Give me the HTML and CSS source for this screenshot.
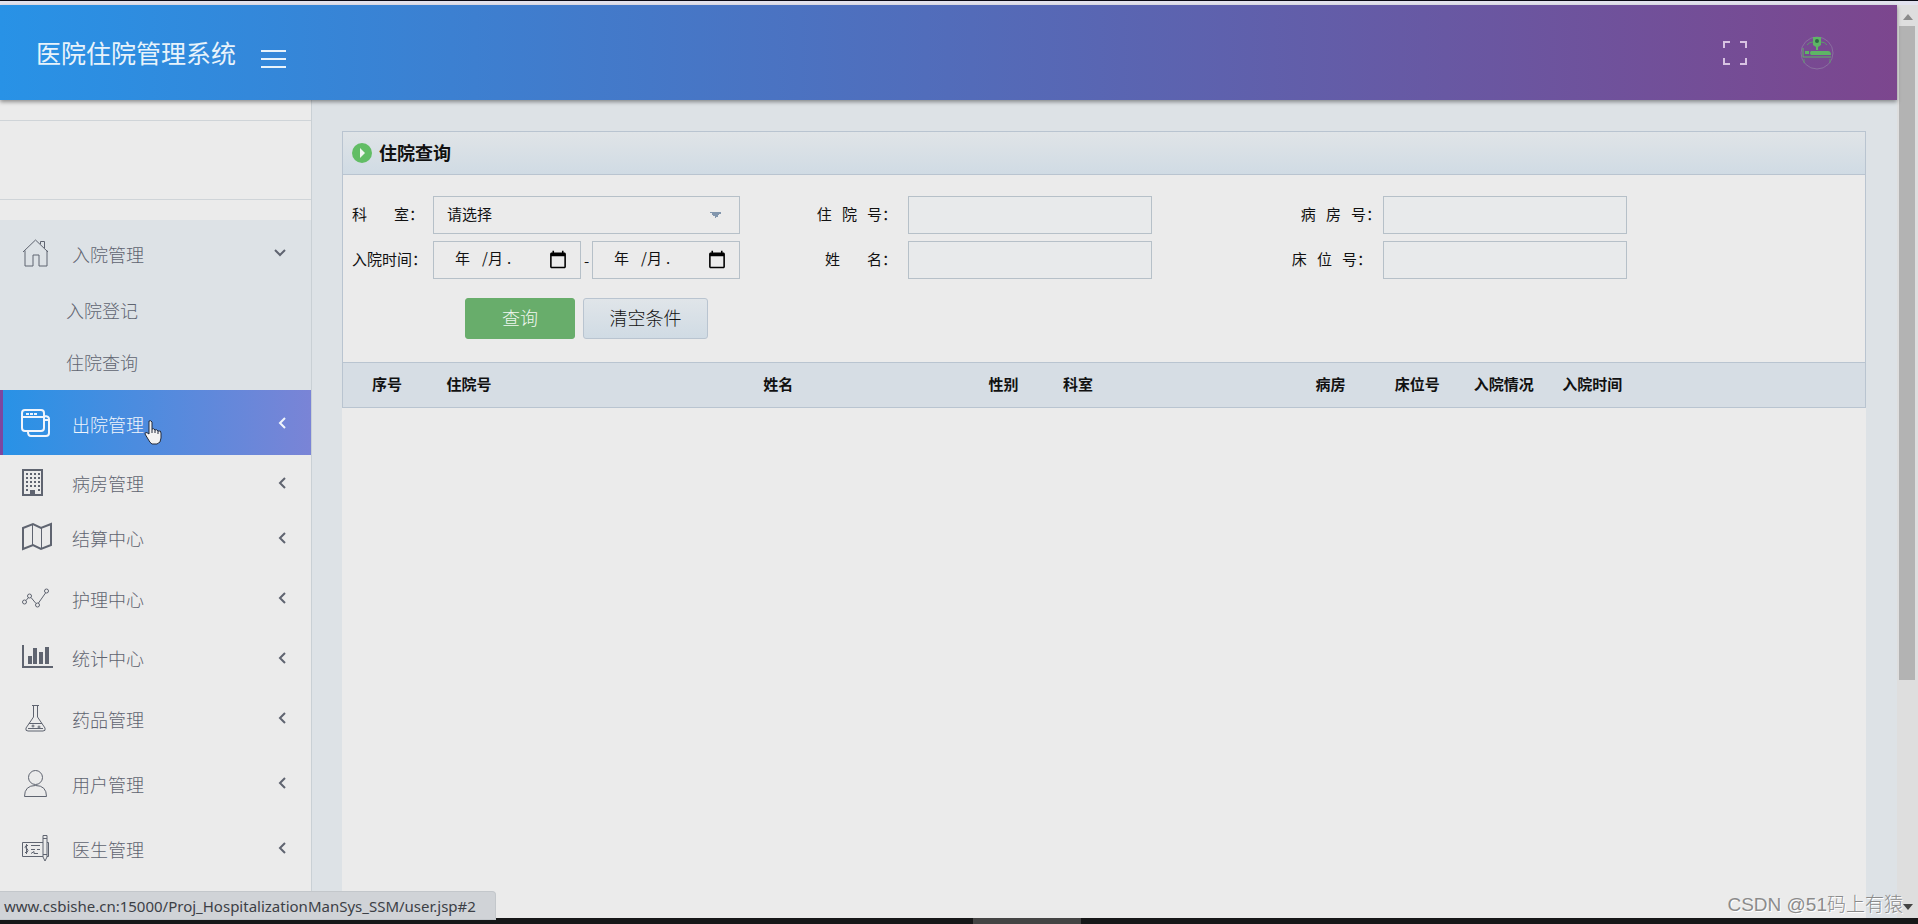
FILE: index.html
```html
<!DOCTYPE html>
<html lang="zh-CN">
<head>
  <meta charset="UTF-8">
  <meta name="viewport" content="width=device-width, initial-scale=1.0">
  <title>医院住院管理系统</title>
  <link rel="stylesheet" href="styles.css">
</head>
<body>
  <div class="top-edge"></div>

  <div class="window">
    <div class="page">
      <header class="topbar">
        <h1>医院住院管理系统</h1>
        <button class="menu-toggle" type="button" aria-label="菜单"><span></span><span></span><span></span></button>
        <button class="fullscreen" type="button" aria-label="全屏">
          <svg width="26" height="26" viewBox="0 0 26 26"><path d="M2 8V2h6M18 2h6v6M24 18v6h-6M8 24H2v-6"/></svg>
        </button>
        <a class="avatar" href="#" aria-label="用户">
          <svg width="36" height="36" viewBox="0 0 36 36">
            <circle cx="18" cy="18" r="16" fill="none" stroke="#8a6fa0"/>
            <path d="M14 2h8v8l-3 2v3h-2v-3l-3-2z" fill="#5eb565"/>
            <circle cx="18" cy="6" r="2" fill="#2d6a45"/>
            <path d="M8 10q2-3 6-3M28 10q-2-3-6-3" fill="none" stroke="#5c9a6c"/>
            <path d="M4 13v9h28" fill="none" stroke="#5eb565" stroke-width="1"/>
            <path d="M6 16h4v3H6zM12 16h17q3 0 3 4H12q-2-2 0-4z" fill="#5eb565"/>
            <path d="M5 24v4M31 24v4" stroke="#5c9a6c"/>
          </svg>
        </a>
      </header>

      <div class="content">
        <!-- Sidebar -->
        <nav class="sidebar">
          <div class="profile"></div>
          <ul class="menu">
            <li class="group">
              <a class="item open" href="#1">
                <svg class="icon" width="32" height="32" viewBox="0 0 32 32"><path d="M3 15L15.500 3 28 15M5 13.500V29h8V18h6v11h8V13.500M20.500 7V4.500h4V11"/></svg>
                <span>入院管理</span>
                <svg class="arrow" width="12" height="12" viewBox="0 0 12 12"><path d="M1 3l5 5 5-5"/></svg>
              </a>
              <ul class="submenu">
                <li><a href="#">入院登记</a></li>
                <li><a href="#">住院查询</a></li>
              </ul>
            </li>
            <li>
              <a class="item hover" href="#2">
                <svg class="icon" width="32" height="32" viewBox="0 0 32 32"><path stroke-width="2" d="M5 3h16q3 0 3 3v15q0 3-3 3H5q-3 0-3-3V6q0-3 3-3zM2 10h22M24 9q5 0 5 3v14q0 3-3 3H11q-3 0-3-4M24 13h5"/><path stroke-width="2" stroke-dasharray="3 1" d="M6 7h11"/></svg>
                <span>出院管理</span>
                <svg class="arrow" width="12" height="12" viewBox="0 0 12 12"><path d="M8 1L3 6l5 5"/></svg>
                <svg class="cursor" width="20" height="26" viewBox="0 0 20 26"><path d="M6 2q2-1 3 1v7q2-1 3 1 2-1 3 1 3-1 3 2v5q0 5-4 6H9q-2-1-4-5l-3-5q0-3 4 0z" fill="#f2f2f2" stroke="#222b3d" stroke-width="1"/><path d="M9 10v4M12 11v3M15 12v3" stroke="#222b3d"/></svg>
              </a>
            </li>
            <li>
              <a class="item compact" href="#3">
                <svg class="icon" width="32" height="32" viewBox="0 0 32 32"><path stroke-width="2" d="M3 3h19v25H3z"/><path stroke-width="2" stroke-dasharray="2 2" d="M6 7h14M6 11h14M6 15h14M6 19h14M6 23h2M18 23h2"/><path class="solid" d="M10 23h5v5h-5z"/></svg>
                <span>病房管理</span>
                <svg class="arrow" width="12" height="12" viewBox="0 0 12 12"><path d="M8 1L3 6l5 5"/></svg>
              </a>
            </li>
            <li>
              <a class="item compact" href="#4">
                <svg class="icon" width="32" height="32" viewBox="0 0 32 32"><path stroke-width="2" d="M3 6l10-4 8 4 10-4v21l-10 4-8-4-10 4z"/><path d="M12.500 2v21M21.500 6v21"/></svg>
                <span>结算中心</span>
                <svg class="arrow" width="12" height="12" viewBox="0 0 12 12"><path d="M8 1L3 6l5 5"/></svg>
              </a>
            </li>
            <li>
              <a class="item" href="#5">
                <svg class="icon" width="32" height="32" viewBox="0 0 32 32"><circle cx="4.500" cy="20" r="2"/><circle cx="9.500" cy="14" r="2"/><circle cx="17.500" cy="23" r="2"/><circle cx="26.500" cy="9" r="2"/><path d="M6 18.500l2.500-3M11 15.500l5 6M18.500 21l7-10"/></svg>
                <span>护理中心</span>
                <svg class="arrow" width="12" height="12" viewBox="0 0 12 12"><path d="M8 1L3 6l5 5"/></svg>
              </a>
            </li>
            <li>
              <a class="item compact" href="#6">
                <svg class="icon" width="32" height="32" viewBox="0 0 32 32"><path stroke-width="2" d="M3 3v22h30"/><path class="solid" d="M8 14h4v8H8zM13 6h4v16h-4zM19 10h4v12h-4zM25 5h4v17h-4z"/></svg>
                <span>统计中心</span>
                <svg class="arrow" width="12" height="12" viewBox="0 0 12 12"><path d="M8 1L3 6l5 5"/></svg>
              </a>
            </li>
            <li>
              <a class="item" href="#7">
                <svg class="icon" width="32" height="32" viewBox="0 0 32 32"><path d="M12 3.500h7M13.500 4v11L6 26q-1 3 2 3h15q3 0 2-3l-7.500-11V4M9 21.500h13M8 26.500h15"/><circle cx="13" cy="24" r="1"/><circle cx="19" cy="25" r="1"/></svg>
                <span>药品管理</span>
                <svg class="arrow" width="12" height="12" viewBox="0 0 12 12"><path d="M8 1L3 6l5 5"/></svg>
              </a>
            </li>
            <li>
              <a class="item" href="#8">
                <svg class="icon" width="32" height="32" viewBox="0 0 32 32"><circle cx="15.500" cy="10.500" r="7"/><path d="M4.500 29.500q0-11 11-11t11 11z"/></svg>
                <span>用户管理</span>
                <svg class="arrow" width="12" height="12" viewBox="0 0 12 12"><path d="M8 1L3 6l5 5"/></svg>
              </a>
            </li>
            <li>
              <a class="item" href="#9">
                <svg class="icon" width="32" height="32" viewBox="0 0 32 32"><path d="M23 10.500H2.500v14H23M27 10.500h1.500v14H27M23 3.500h4V25l-2 4-2-4zM23 6.500h4M23 22.500h4M11 13.500h9M11 17.500h4M17 17.500h3M11 21.500l3-2v2h4M8 13.500H6q-2 2 0 3h1q2 2 0 4H5M6.500 12v10"/></svg>
                <span>医生管理</span>
                <svg class="arrow" width="12" height="12" viewBox="0 0 12 12"><path d="M8 1L3 6l5 5"/></svg>
              </a>
            </li>
          </ul>
        </nav>

        <!-- Admission query -->
        <main>
          <section class="panel">
            <h2>
              <svg width="20" height="20" viewBox="0 0 20 20"><circle cx="10" cy="10" r="10" fill="#62bd65"/><path d="M8 5l5 5-5 5z" fill="#f0f5f0"/></svg>
              <span>住院查询</span>
            </h2>
            <form>
              <div class="fields">
                <label for="dept">科&nbsp;&nbsp;&nbsp;&nbsp;&nbsp;&nbsp;&nbsp;&nbsp;室：</label>
                <select id="dept"><option>请选择</option></select>
                <label class="right" for="hosp-no">住&nbsp;&nbsp;&nbsp;院&nbsp;&nbsp;&nbsp;号：</label>
                <input id="hosp-no" type="text">
                <label class="right near" for="room-no">病&nbsp;&nbsp;&nbsp;房&nbsp;&nbsp;&nbsp;号：</label>
                <input id="room-no" type="text">

                <label class="row-start" for="date-from">入院时间：</label>
                <div class="dates">
                  <div class="date">
                    <input id="date-from" type="date">
                    <span class="hint"><span>年</span><span>/月</span><span>.</span></span>
                  </div>
                  <span class="dash">-</span>
                  <div class="date">
                    <input id="date-to" type="date" aria-label="入院时间">
                    <span class="hint"><span>年</span><span>/月</span><span>.</span></span>
                  </div>
                </div>
                <label class="right" for="name">姓&nbsp;&nbsp;&nbsp;&nbsp;&nbsp;&nbsp;&nbsp;&nbsp;名：</label>
                <input id="name" type="text">
                <label class="right" for="bed-no">床&nbsp;&nbsp;&nbsp;位&nbsp;&nbsp;&nbsp;号：</label>
                <input id="bed-no" type="text">
              </div>
              <div class="buttons">
                <button class="search" type="button">查询</button>
                <button class="clear" type="reset">清空条件</button>
              </div>
            </form>
            <table>
              <thead>
                <tr>
                  <th class="w-xs">序号</th>
                  <th class="w-xl">住院号</th>
                  <th class="w-md">姓名</th>
                  <th class="w-xs">性别</th>
                  <th class="w-lg">科室</th>
                  <th class="w-sm">病房</th>
                  <th class="w-sm">床位号</th>
                  <th class="w-state">入院情况</th>
                  <th>入院时间</th>
                </tr>
              </thead>
              <tbody></tbody>
            </table>
          </section>
        </main>
      </div>
    </div>

    <div class="scrollbar">
      <svg width="10" height="6" viewBox="0 0 10 6"><path d="M0 6l5-6 5 6z" fill="#8b8b8b"/></svg>
      <div class="track"><div class="thumb"></div></div>
      <svg width="10" height="6" viewBox="0 0 10 6"><path d="M0 0h10L5 6z" fill="#444"/></svg>
    </div>
  </div>

  <div class="bottom-edge"><div></div></div>
  <div class="status">www.csbishe.cn:15000/Proj_HospitalizationManSys_SSM/user.jsp#2</div>
  <div class="watermark">CSDN @51码上有猿</div>
</body>
</html>
```
FILE: styles.css
```css
/* General Styles */
* {
  box-sizing: border-box;
}

body {
  margin: 0;
  height: 100vh;
  display: flex;
  flex-direction: column;
  overflow: hidden;
  background: #ebebeb;
  color: #111;
  font-family: "Noto Sans CJK SC", sans-serif;
  font-size: 15px;
}

a {
  color: inherit;
  text-decoration: none;
}

ul {
  list-style: none;
  margin: 0;
  padding: 0;
}

button,
input,
select {
  font-family: inherit;
}

.top-edge {
  height: 5px;
  flex: none;
  background: #e2e2ee;
  border-top: 1px solid #0b0b16;
}

.bottom-edge {
  height: 6px;
  flex: none;
  display: flex;
  justify-content: center;
  padding-left: 136px;
  background: #161718;
}

.bottom-edge div {
  width: 108px;
  background: #444;
}

.window {
  flex: 1;
  min-height: 0;
  display: flex;
}

.page {
  flex: 1;
  min-width: 0;
  display: flex;
  flex-direction: column;
}

/* Header */
.topbar {
  height: 95px;
  flex: none;
  display: flex;
  align-items: center;
  padding: 0 62px 0 36px;
  background: linear-gradient(to right, #2892e6, #7c468e);
  box-shadow: 0 2px 4px rgba(0, 0, 0, 0.4);
  z-index: 1;
}

.topbar h1 {
  margin: 0;
  padding-bottom: 2px;
  color: #e8f3fb;
  font-size: 25px;
  font-weight: 400;
}

.topbar button {
  padding: 0;
  border: none;
  background: none;
}

.menu-toggle {
  display: grid;
  gap: 6px;
  margin: 12px auto 0 25px;
}

.menu-toggle span {
  width: 25px;
  height: 2px;
  background: #e8f3fb;
}

.fullscreen {
  display: flex;
  margin-right: 51px;
}

.fullscreen svg {
  fill: none;
  stroke: #d8c3e2;
  stroke-width: 2;
}

.avatar {
  display: flex;
}

/* Sidebar */
.content {
  flex: 1;
  min-height: 0;
  display: flex;
}

.sidebar {
  width: 312px;
  flex: none;
  overflow: hidden;
  border-right: 1px solid #c9d0d5;
}

.profile {
  height: 80px;
  margin: 20px 0;
  border: 1px solid #cfd4d8;
  border-width: 1px 0;
}

.menu {
  color: #5f6470;
  font-size: 18px;
  font-weight: 300;
}

.group {
  height: 170px;
  background: #dde2e6;
}

.item {
  position: relative;
  display: flex;
  align-items: center;
  height: 65px;
  padding: 0 22px 0 20px;
}

.item.open {
  padding-right: 25px;
}

.item.compact {
  height: 55px;
}

.item span {
  flex: 1;
  margin-left: 20px;
  padding-top: 3px;
}

.item.compact span {
  padding-top: 0;
}

.icon {
  overflow: visible;
}

.icon,
.arrow {
  fill: none;
  stroke: currentColor;
  stroke-width: 1;
}

.arrow {
  stroke-width: 2;
}

.icon .solid {
  fill: currentColor;
  stroke: none;
}

.menu .hover {
  color: #f0f5fc;
  border-left: 3px solid #7c46a0;
  padding-left: 17px;
  background: linear-gradient(to right, #2892e6, #7a84d6);
}

.cursor {
  position: absolute;
  left: 140px;
  top: 29px;
}

.submenu a {
  display: block;
  height: 52px;
  padding-left: 66px;
  line-height: 50px;
}

/* Query panel */
main {
  flex: 1;
  min-width: 0;
  display: flex;
  padding: 31px 31px 0 30px;
  background: #dde2e6;
}

.panel {
  flex: 1;
  min-width: 0;
  background: #ebebeb;
}

.panel h2 {
  display: flex;
  align-items: center;
  gap: 7px;
  height: 44px;
  margin: 0;
  padding: 0 9px;
  border: 1px solid #b9c4d0;
  background: linear-gradient(#e0e4e7, #d0dbe4);
  font-size: 18px;
  font-weight: 700;
}

.panel h2 span {
  padding-bottom: 2px;
}

form {
  padding: 21px 0 23px 9px;
  border: 1px solid #b9c4d0;
  border-width: 0 1px;
}

.fields {
  display: grid;
  grid-template-columns: 81px minmax(0, 307fr) 168fr minmax(0, 244fr) 231fr minmax(0, 244fr) 238fr;
  row-gap: 7px;
  align-items: center;
}

label {
  padding-bottom: 3px;
}

.row-start {
  grid-column: 1;
}

.right {
  text-align: right;
  padding-right: 11px;
}

.near {
  padding-right: 2px;
}

.fields input,
.fields select {
  width: 100%;
  height: 38px;
  border: 1px solid #b6c0c8;
  border-radius: 0;
  background: #e8eaeb;
  color: #111;
  font-size: 15px;
}

.fields select {
  appearance: none;
  padding: 0 13px 3px;
  background: linear-gradient(to bottom right, #8296ad 50%, transparent 50%) no-repeat right 17px center / 6px 6px,
    linear-gradient(to bottom left, #8296ad 50%, transparent 50%) no-repeat right 23px center / 6px 6px,
    #ebebeb;
}

.dates {
  display: flex;
  align-items: center;
}

.date {
  position: relative;
  flex: 1;
  min-width: 0;
}

.date input {
  display: block;
  padding: 0 12px 0 20px;
  background: #ebebeb;
}

.date input::-webkit-datetime-edit {
  color: transparent;
  overflow: hidden;
}

.date input::-webkit-calendar-picker-indicator {
  width: 20px;
  height: 20px;
  margin-left: 0;
  padding: 0;
}

.hint {
  position: absolute;
  left: 22px;
  top: 6px;
  display: flex;
  gap: 12px;
  pointer-events: none;
}

.hint span:last-child {
  margin-left: -8px;
}

.dash {
  width: 11px;
  text-align: center;
}

.buttons {
  display: flex;
  gap: 8px;
  padding: 19px 0 0 113px;
}

.buttons button {
  height: 41px;
  padding: 0 0 4px;
  border: 1px solid #68ad6b;
  border-radius: 3px;
  font-size: 18px;
  font-weight: 300;
}

.search {
  width: 110px;
  background: #68ad6b;
  color: #f0f7f0;
}

.buttons .clear {
  width: 125px;
  border-color: #b9c4d0;
  background: linear-gradient(#e0e5e9, #d0dbe4);
  color: #111;
}

/* Result table */
table {
  width: 100%;
  table-layout: fixed;
  border-collapse: separate;
  border-spacing: 0;
  border: 1px solid #b9c4d0;
  background: #d6dde4;
}

th {
  height: 44px;
  padding: 0 0 3px 29px;
  text-align: left;
  font-weight: 700;
  white-space: nowrap;
}

.w-xs { width: 4.9%; }
.w-sm { width: 5.2%; }
.w-state { width: 5.8%; }
.w-md { width: 14.8%; }
.w-lg { width: 16.6%; }
.w-xl { width: 20.8%; }

/* Scrollbar */
.scrollbar {
  width: 21px;
  display: flex;
  flex-direction: column;
  align-items: center;
  padding: 9px 0 8px;
  background: #dedede;
}

.track {
  flex: 1;
  align-self: stretch;
  padding: 6px 3px 6px 2px;
}

.thumb {
  height: 75%;
  background: #b3b3b3;
}

/* Overlays */
.status {
  position: absolute;
  left: 0;
  bottom: 4px;
  height: 29px;
  width: 496px;
  padding-left: 4px;
  border: 1px solid #c3c7cb;
  border-left: none;
  border-radius: 0 4px 0 0;
  background: #d0d3d7;
  color: #3c4046;
  font: 15px/28px "Noto Sans", sans-serif;
  white-space: nowrap;
  z-index: 2;
}

.watermark {
  position: absolute;
  right: 15px;
  bottom: 6px;
  color: #8b8b8b;
  font: 300 19px/26px "Liberation Sans", "Noto Sans CJK SC", sans-serif;
  text-shadow: 1px 1px 0 #fff;
  z-index: 2;
}
```
